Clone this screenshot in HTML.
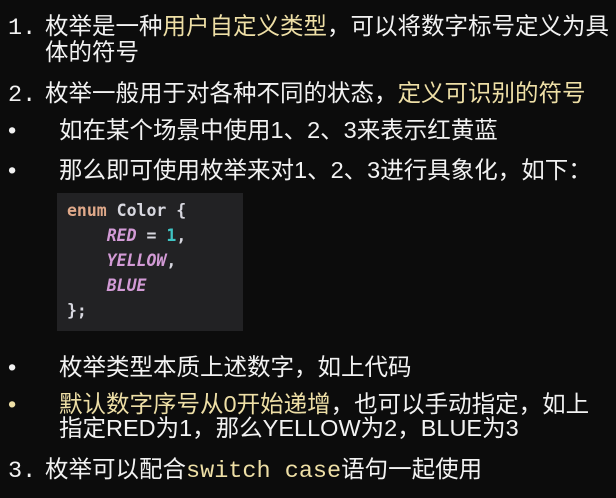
<!DOCTYPE html>
<html><head><meta charset="utf-8"><style>
html,body{margin:0;padding:0;}
body{width:616px;height:498px;background:#0c0c0c;position:relative;overflow:hidden;
font-family:"Liberation Sans","Noto Sans CJK SC",sans-serif;color:#f2f2f2;}
.l{position:absolute;font-size:23.5px;line-height:28px;white-space:nowrap;letter-spacing:0;}
.y{color:#eedfa6;}
.m{font-family:"Liberation Mono","Noto Sans CJK SC",monospace;}
.num{display:inline-block;width:37px;font-family:"Liberation Mono",monospace;}
.b{position:absolute;left:51px;}
.code{position:absolute;left:57px;top:193px;width:186px;height:138px;background:#222224;
font-family:"DejaVu Sans Mono","Liberation Mono",monospace;font-size:16.5px;line-height:25px;font-weight:600;}
.code div{position:absolute;left:10px;white-space:pre;color:#d8d8e0;}
.k{color:#e0a98a;} .p{color:#d39bd6;font-style:italic;} .n{color:#3fc4c4;}
</style></head><body>
<div class="l" style="left:8px;top:12px;"><span class="num">1.</span>枚举是一种<span class="y">用户自定义类型</span>，可以将数字标号定义为具</div>
<div class="l" style="left:45px;top:38px;">体的符号</div>
<div class="l" style="left:8px;top:79px;"><span class="num">2.</span>枚举一般用于对各种不同的状态，<span class="y">定义可识别的符号</span></div>
<div class="l" style="left:8px;top:116px;">•<span class="b">如在某个场景中使用1、2、3来表示红黄蓝</span></div>
<div class="l" style="left:8px;top:156px;">•<span class="b">那么即可使用枚举来对1、2、3进行具象化，如下：</span></div>
<div class="code">
<div style="top:5px;"><span class="k">enum</span> Color {</div>
<div style="top:30px;">    <span class="p">RED</span> = <span class="n">1</span>,</div>
<div style="top:55px;">    <span class="p">YELLOW</span>,</div>
<div style="top:80px;">    <span class="p">BLUE</span></div>
<div style="top:105px;">};</div>
</div>
<div class="l" style="left:8px;top:353px;">•<span class="b">枚举类型本质上述数字，如上代码</span></div>
<div class="l y" style="left:8px;top:390px;">•<span class="b"><span class="y">默认数字序号从0开始递增</span><span style="color:#f2f2f2">，也可以手动指定，如上</span></span></div>
<div class="l" style="left:59px;top:414px;">指定RED为1，那么YELLOW为2，BLUE为3</div>
<div class="l" style="left:8px;top:455px;"><span class="num">3.</span>枚举可以配合<span class="y m">switch case</span>语句一起使用</div>
</body></html>
